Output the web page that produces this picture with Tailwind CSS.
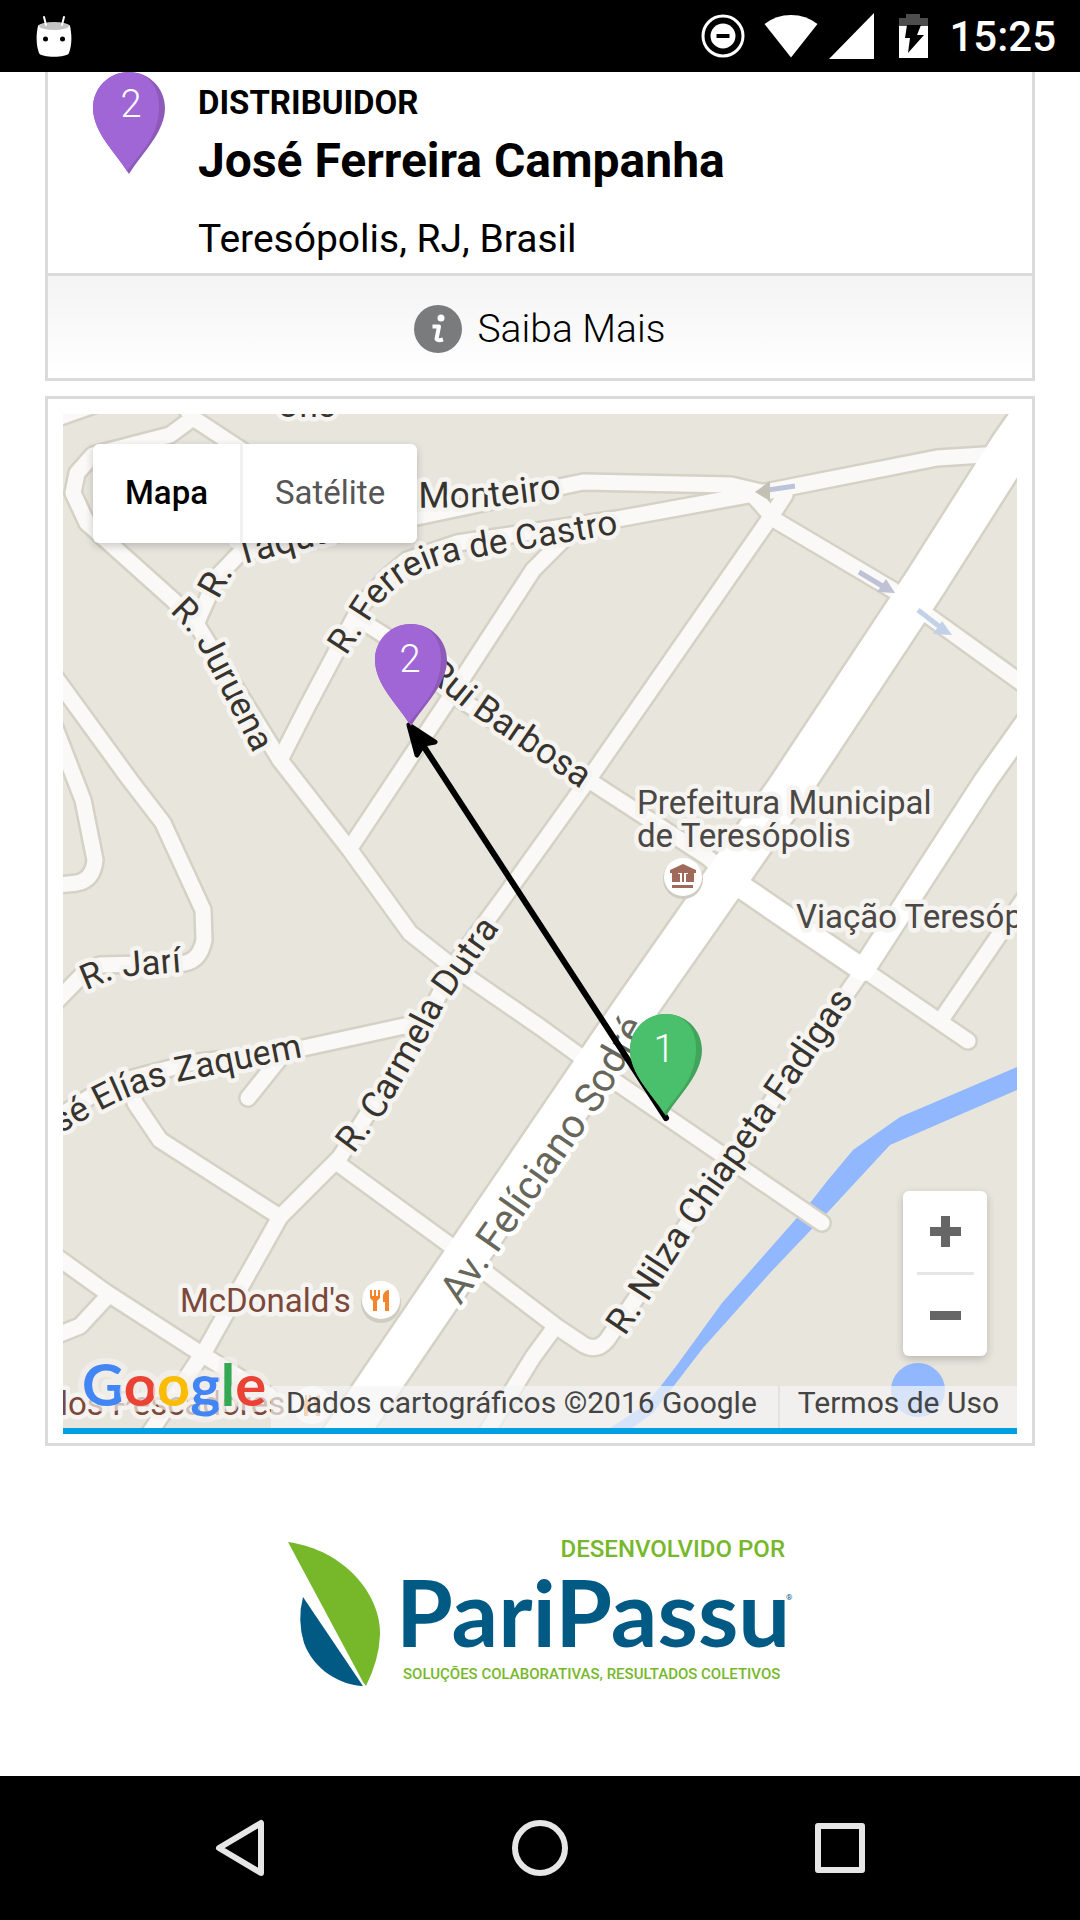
<!DOCTYPE html>
<html lang="pt-BR">
<head>
<meta charset="utf-8">
<meta name="viewport" content="width=device-width, initial-scale=1">
<title>Rastreabilidade</title>
<script src="https://cdn.jsdelivr.net/npm/@tailwindcss/browser@4"></script>
</head>
<body class="flex min-h-screen flex-col bg-white font-[Roboto,sans-serif] text-black">

<!-- Status bar -->
<header class="flex h-[72px] shrink-0 items-center justify-between bg-black pr-[24px] pl-[36px] text-white">
  <svg class="h-[42px] w-[36px]" viewBox="0 0 36 42" aria-hidden="true">
    <path d="M2 11C2 7 34 7 34 11C36 20 36 30 33 38C31 43 5 43 3 38C0 30 0 20 2 11Z" fill="#fff"/>
    <ellipse cx="18" cy="11" rx="15" ry="4" fill="#c4c4c4"/>
    <path d="M8 2l2 8M28 2l-2 8" stroke="#fff" stroke-width="2" stroke-linecap="round"/>
    <circle cx="9.500" cy="24" r="2.500"/><circle cx="26.500" cy="24" r="2.500"/>
  </svg>
  <div class="flex items-center">
    <svg class="mr-[19px] h-[44px] w-[44px]" viewBox="0 0 44 44" aria-hidden="true">
      <circle cx="22" cy="22" r="20" fill="none" stroke="#fff" stroke-width="3"/>
      <circle cx="22" cy="22" r="12.500" fill="#fff"/><path d="M15.500 20h13v4h-13z"/>
    </svg>
    <svg class="mr-[11px] h-[44px] w-[54px]" viewBox="0 0 54 44" aria-hidden="true"><path d="M27 43.500L0.500 10Q12 1 27 1T53.500 10Z" fill="#fff"/></svg>
    <svg class="mr-[25px] h-[46px] w-[45px]" viewBox="0 0 45 46" aria-hidden="true"><path d="M45 0V46H0Z" fill="#fff"/></svg>
    <svg class="mr-[21px] h-[44px] w-[29px]" viewBox="0 0 29 44" aria-hidden="true">
      <path d="M0 12V4H7V0H21V4H29V12Z" fill="#4d4d4d"/><path d="M0 12H29V44H0Z" fill="#fff"/>
      <path d="M8 11h14l-4 10h7L9 39l2-15H6z"/>
    </svg>
    <time class="pt-[2px] text-[42px] leading-[48px] font-medium">15:25</time>
  </div>
</header>

<main class="grow px-[45px]">
  <!-- Distributor card -->
  <section class="border-3 border-t-0 border-[#dbdbdb]">
    <div class="flex gap-[33px] pr-4 pb-[4px] pl-[45px]">
      <svg class="h-[102px] w-[72px] shrink-0" viewBox="0 0 72 102" role="img" aria-label="Ponto 2">
        <path d="M36 0C56 0 72 16 72 36C72 60 50 80 36 102C22 80 0 60 0 36C0 16 16 0 36 0Z" fill="#8d5aba"/>
        <path d="M36 0C54 0 66 14 66 34C66 66 46 82 34 99C22 80 0 60 0 36C0 16 16 0 36 0Z" fill="#a166d6"/>
        <text x="38" y="45" text-anchor="middle" fill="#fff" font-size="38" font-weight="300">2</text>
      </svg>
      <div class="pt-[13px]">
        <h2 class="text-[33px] leading-[36px] font-bold">DISTRIBUIDOR</h2>
        <p class="mt-2 text-[48px] leading-[64px] font-bold">José Ferreira Campanha</p>
        <p class="mt-4 text-[39px] leading-[60px]">Teresópolis, RJ, Brasil</p>
      </div>
    </div>
    <button type="button" class="flex h-[105px] w-full items-center justify-center gap-[15px] border-t-3 border-[#dbdbdb] bg-linear-to-b from-[#f4f4f4] to-white pt-[4px] text-[39px] font-light">
      <svg class="h-[48px] w-[48px]" viewBox="0 0 48 48" aria-hidden="true">
        <circle cx="24" cy="24" r="24" fill="#7a7b7d"/>
        <circle cx="27" cy="13" r="3.500" fill="#fff"/>
        <path d="M18.500 21.500H25L22.500 34Q24 36 29 34.500" fill="none" stroke="#fff" stroke-width="4" stroke-linejoin="round"/>
      </svg>
      Saiba Mais
    </button>
  </section>

  <!-- Route map -->
  <section class="mt-[15px] border-3 border-[#dbdbdb] p-[15px] pb-[9px]">
    <div class="relative overflow-hidden border-b-6 border-[#00a0e3]">
      <svg class="block w-full" viewBox="63 414 954 1014" role="img" aria-label="Mapa de Teresópolis">
        <defs>
          <g id="roads" fill="none" stroke-linejoin="round" stroke-linecap="round">
            <path d="M40 424L120 396M180 400L193 418L237 447L270 470M193 418L170 435L93 455L77 473L73 493L87 523L173 600L197 625L280 760L350 850L410 933L453 967L540 1027L613 1080L667 1117L822 1223"/>
            <path d="M197 622L217 577L240 553L323 537L417 517L583 482L731 485L765 493"/>
            <path d="M280 760L307 707L360 607L387 577L407 560L457 543L617 519L765 492L937 458L1000 454"/>
            <path d="M575 528L533 570L453 693L350 848"/>
            <path d="M785 495L770 518L593 773L507 893L453 967L423 1027L340 1157L280 1217L207 1347L145 1440"/>
            <path d="M751 493L775 520L893 590L930 617L1030 689"/>
            <path d="M360 620L387 637L453 695L593 783L707 857L743 887L860 967L968 1041"/>
            <path d="M863 970L740 1147L630 1307L607 1340Q597 1352 584 1345L557 1327L447 1243L340 1165"/>
            <path d="M1030 890L943 1017"/>
            <path d="M50 670L130 780L163 823L203 910L204 940Q200 960 185 963L100 965L87 970L50 1008"/>
            <path d="M50 715L83 800L95 860Q93 880 77 883L50 886"/>
            <path d="M50 1122L93 1095L133 1078L190 1063L280 1053L423 1022M280 1058L248 1098M130 1080L135 1103L160 1140L280 1217"/>
            <path d="M50 1252L107 1293L203 1355L270 1396M50 1338L80 1326L107 1297M555 1327L533 1357L485 1435"/>
          </g>
          <path id="avenue" fill="none" stroke-linejoin="round" d="M1060 378L1012 446L925 583L788 790L632 1013L380 1383L330 1457"/>
          <path id="street" fill="none" stroke-linejoin="round" d="M1040 704L986 780L863 970L737 884"/>
          <path id="p-juruena" d="M163 605L183 625L198 645L258 762"/>
          <path id="p-taquara" d="M218 600L233 573Q240 564 252 562L365 533"/>
          <path id="p-castro" d="M341 664L373 615Q397 574 455 561L628 532"/>
          <path id="p-carmela" d="M345 1166L385 1112L428 1037L443 1008L508 916"/>
          <path id="p-sodre" d="M449 1322L603 1103L656 1009"/>
          <path id="p-nilza" d="M612 1356L648 1302L695 1229L785 1100L867 980"/>
          <path id="p-barbosa" d="M400 656L470 713L581 789"/>
          <path id="p-jari" d="M84 991L118 977L184 972"/>
          <path id="p-zaquem" d="M15 1160L98 1112Q130 1094 172 1083L303 1057"/>
          <path id="p-monteiro" d="M400 508L490 507L580 496"/>
        </defs>

        <rect x="63" y="414" width="954" height="1014" fill="#e8e5dd"/>
        <path d="M1017 1067L900 1117L853 1150L828 1180L810 1203L722 1303L677 1365L660 1387L645 1405L610 1428H632L653 1413L673 1387L703 1348L770 1273L827 1213L890 1145L1017 1090Z" fill="#91b8ff"/>
        <circle cx="918" cy="1390" r="27" fill="#91b8ff"/>

        <use href="#roads" stroke="#d5d1c5" stroke-width="20"/>
        <use href="#street" stroke="#d5d1c5" stroke-width="27"/>
        <use href="#avenue" stroke="#d5d1c5" stroke-width="47"/>
        <use href="#roads" stroke="#faf9f7" stroke-width="15"/>
        <use href="#street" stroke="#fff" stroke-width="22"/>
        <use href="#avenue" stroke="#fff" stroke-width="42"/>

        <!-- One-way arrows -->
        <path d="M795 486L768 490" stroke="#bcc4da" stroke-width="5"/><path d="M755 492L770 481V501Z" fill="#c3c0b5"/>
        <path d="M859 572L884 587" stroke="#bfc1d4" stroke-width="5"/><path d="M895 593L886 579L877 592Z" fill="#bfc1d4"/>
        <path d="M918 610L940 627" stroke="#c3d1e8" stroke-width="5"/><path d="M952 635L942 621L933 634Z" fill="#c3d1e8"/>

        <!-- Street and place names -->
        <g font-size="36" fill="#37332e" stroke="#f6f4f0" stroke-width="9" stroke-linejoin="round" paint-order="stroke" text-anchor="middle">
          <text x="306" y="417" font-size="33">One</text>
          <text font-size="35"><textPath href="#p-juruena" startOffset="50%">R. Juruena</textPath></text>
          <text text-anchor="start"><textPath href="#p-taquara">R. Taqua</textPath></text>
          <text font-size="35"><textPath href="#p-castro" startOffset="50%">R. Ferreira de Castro</textPath></text>
          <text><textPath href="#p-carmela" startOffset="50%">R. Carmela Dutra</textPath></text>
          <text font-size="40" fill="#67665a" stroke="#fff"><textPath href="#p-sodre" startOffset="50%">Av. Felíciano Sodré</textPath></text>
          <text><textPath href="#p-nilza" startOffset="50%">R. Nilza Chiapeta Fadigas</textPath></text>
          <text text-anchor="end"><textPath href="#p-barbosa" startOffset="100%">Rui Barbosa</textPath></text>
          <text font-size="35"><textPath href="#p-jari" startOffset="50%">R. Jarí</textPath></text>
          <text font-size="35" text-anchor="end"><textPath href="#p-zaquem" startOffset="100%">José Elías Zaquem</textPath></text>
          <text><textPath href="#p-monteiro" startOffset="50%">Monteiro</textPath></text>
        </g>
        <g font-size="33" fill="#4a4745" stroke="#f6f4f0" stroke-width="9" stroke-linejoin="round" paint-order="stroke">
          <text x="637" y="814">Prefeitura Municipal</text>
          <text x="637" y="847">de Teresópolis</text>
          <text x="796" y="928">Viação Teresópolis</text>
          <text x="180" y="1312" fill="#7b483b">McDonald's</text>
          <text x="60" y="1415" fill="#7b483b">los Pescadores</text>
        </g>

        <!-- Place icons -->
        <circle cx="683" cy="879" r="20" fill="#d0ccc0"/><circle cx="683" cy="877" r="19" fill="#fff"/>
        <path d="M683 864L696 870V873H694V882H686V874H688V873H684V882H682V873H678V874H680V882H672V873H670V870ZM672 885H693V888H672Z" fill="#a06a5a"/>
        <circle cx="381" cy="1303" r="20" fill="#d0ccc0"/><circle cx="381" cy="1300" r="19" fill="#fff"/>
        <path d="M370 1290h2v6h2v-6h2v6h2v-6h2v8l-3 3v10h-4v-10l-3-3zM389 1290v21h-4v-9h-2v-7q2-5 6-5z" fill="#f5852a"/>
        <circle cx="312" cy="1405" r="19" fill="#fff"/>
        <path d="M301 1395h2v6h2v-6h2v6h2v-6h2v8l-3 3v10h-4v-10l-3-3zM320 1395v21h-4v-9h-2v-7q2-5 6-5z" fill="#f5852a"/>

        <!-- Route -->
        <path d="M666 1118L415 733" stroke="#000" stroke-width="6" stroke-linecap="round"/>
        <path d="M417 755L409 725L435 742L424 744Z" stroke="#000" stroke-width="5" stroke-linejoin="round"/>
        <g transform="translate(630 1014)">
          <path d="M36 0C56 0 72 16 72 36C72 60 50 80 36 102C22 80 0 60 0 36C0 16 16 0 36 0Z" fill="#40a45b"/>
          <path d="M36 0C54 0 66 14 66 34C66 66 46 82 34 99C22 80 0 60 0 36C0 16 16 0 36 0Z" fill="#4bc06c"/>
          <text x="34" y="48" text-anchor="middle" fill="#fff" font-size="38" font-weight="300">1</text>
        </g>
        <g transform="translate(375 624)">
          <path d="M36 0C56 0 72 16 72 36C72 60 50 80 36 102C22 80 0 60 0 36C0 16 16 0 36 0Z" fill="#8d5aba"/>
          <path d="M36 0C54 0 66 14 66 34C66 66 46 82 34 99C22 80 0 60 0 36C0 16 16 0 36 0Z" fill="#a166d6"/>
          <text x="35" y="48" text-anchor="middle" fill="#fff" font-size="38" font-weight="300">2</text>
        </g>
      </svg>

      <div class="absolute top-[30px] left-[30px] flex h-[99px] rounded-[6px] bg-white text-[33px] shadow-[0_3px_8px_rgba(0,0,0,0.2)]">
        <button type="button" class="border-r-3 border-[#f1f1f1] px-[32px] pb-[2px] font-medium">Mapa</button>
        <button type="button" class="px-[32px] pb-[2px] text-[#565656]">Satélite</button>
      </div>

      <div class="absolute right-[30px] bottom-[72px] flex w-[84px] flex-col items-center rounded-[6px] bg-white shadow-[0_3px_8px_rgba(0,0,0,0.2)]">
        <button type="button" aria-label="Aumentar o zoom" class="flex h-[81px] w-full items-center justify-center">
          <svg class="h-[31px] w-[31px]" viewBox="0 0 31 31"><path d="M11 0h9v11h11v9H20v11h-9V20H0v-9h11z" fill="#666"/></svg>
        </button>
        <span class="h-[3px] w-[57px] bg-[#e6e6e6]"></span>
        <button type="button" aria-label="Diminuir o zoom" class="flex h-[81px] w-full items-center justify-center">
          <svg class="h-[31px] w-[31px]" viewBox="0 0 31 31"><path d="M0 11h31v9H0z" fill="#666"/></svg>
        </button>
      </div>

      <div class="absolute right-0 bottom-0 flex h-[42px] text-[30px] leading-[34px] text-[#444]">
        <span class="bg-[#f5f5f5]/70 pr-[21px] pl-[15px] whitespace-nowrap">Dados cartográficos ©2016 Google</span>
        <a href="#termos" class="border-l-2 border-[#e4e2de] bg-[#f5f5f5]/70 px-[18px] whitespace-nowrap">Termos de Uso</a>
      </div>
      <a href="#google" class="absolute bottom-0 left-[15px]" aria-label="Google">
        <svg class="h-[78px] w-[200px]" viewBox="0 0 200 78">
          <text x="4" y="56" font-family="Lato, sans-serif" font-size="58" font-weight="700" stroke="#f3f1ed" stroke-opacity="0.7" stroke-width="12" stroke-linejoin="round" paint-order="stroke"><tspan fill="#4285f4">G</tspan><tspan fill="#ea4335">o</tspan><tspan fill="#fbbc05">o</tspan><tspan fill="#4285f4">g</tspan><tspan fill="#34a853">l</tspan><tspan fill="#ea4335">e</tspan></text>
        </svg>
      </a>
    </div>
  </section>

  <!-- Developer logo -->
  <a href="#paripassu" class="mt-[84px] mb-[86px] flex justify-center">
    <svg class="w-[504px] overflow-visible" viewBox="288 1530 504 160" role="img" aria-label="Desenvolvido por PariPassu">
      <path d="M288 1542C345 1550 381 1595 380 1635Q379 1660 366 1686L363 1682Z" fill="#76b82a"/>
      <path d="M303 1597L363 1686C340 1685 314 1670 304 1643Q297 1620 303 1597Z" fill="#005a84"/>
      <g font-family="Roboto, sans-serif" fill="#76b82a" font-weight="500">
        <text x="785" y="1557" text-anchor="end" font-size="24">DESENVOLVIDO POR</text>
        <text x="403" y="1679" font-size="15">SOLUÇÕES COLABORATIVAS, RESULTADOS COLETIVOS</text>
      </g>
      <text x="396" y="1647" font-family="Lato, sans-serif" font-size="92" font-weight="700" fill="#005a84">PariPassu</text>
      <text x="786" y="1600" font-family="Roboto, sans-serif" font-size="8" fill="#005a84">®</text>
    </svg>
  </a>
</main>

<!-- Navigation bar -->
<nav class="flex h-[144px] shrink-0 bg-black px-[90px]">
  <button type="button" aria-label="Voltar" class="flex flex-1 items-center justify-center">
    <svg class="h-[60px] w-[60px]" viewBox="0 0 60 60" fill="none" stroke="#e6e6e6" stroke-width="6" stroke-linejoin="round"><path d="M9 30L51 5V55Z"/></svg>
  </button>
  <button type="button" aria-label="Início" class="flex flex-1 items-center justify-center">
    <svg class="h-[60px] w-[60px]" viewBox="0 0 60 60" fill="none" stroke="#e6e6e6" stroke-width="6"><circle cx="30" cy="30" r="25"/></svg>
  </button>
  <button type="button" aria-label="Recentes" class="flex flex-1 items-center justify-center">
    <svg class="h-[60px] w-[60px]" viewBox="0 0 60 60" fill="none" stroke="#e6e6e6" stroke-width="6" stroke-linejoin="round"><path d="M8 8H52V52H8Z"/></svg>
  </button>
</nav>
</body>
</html>
